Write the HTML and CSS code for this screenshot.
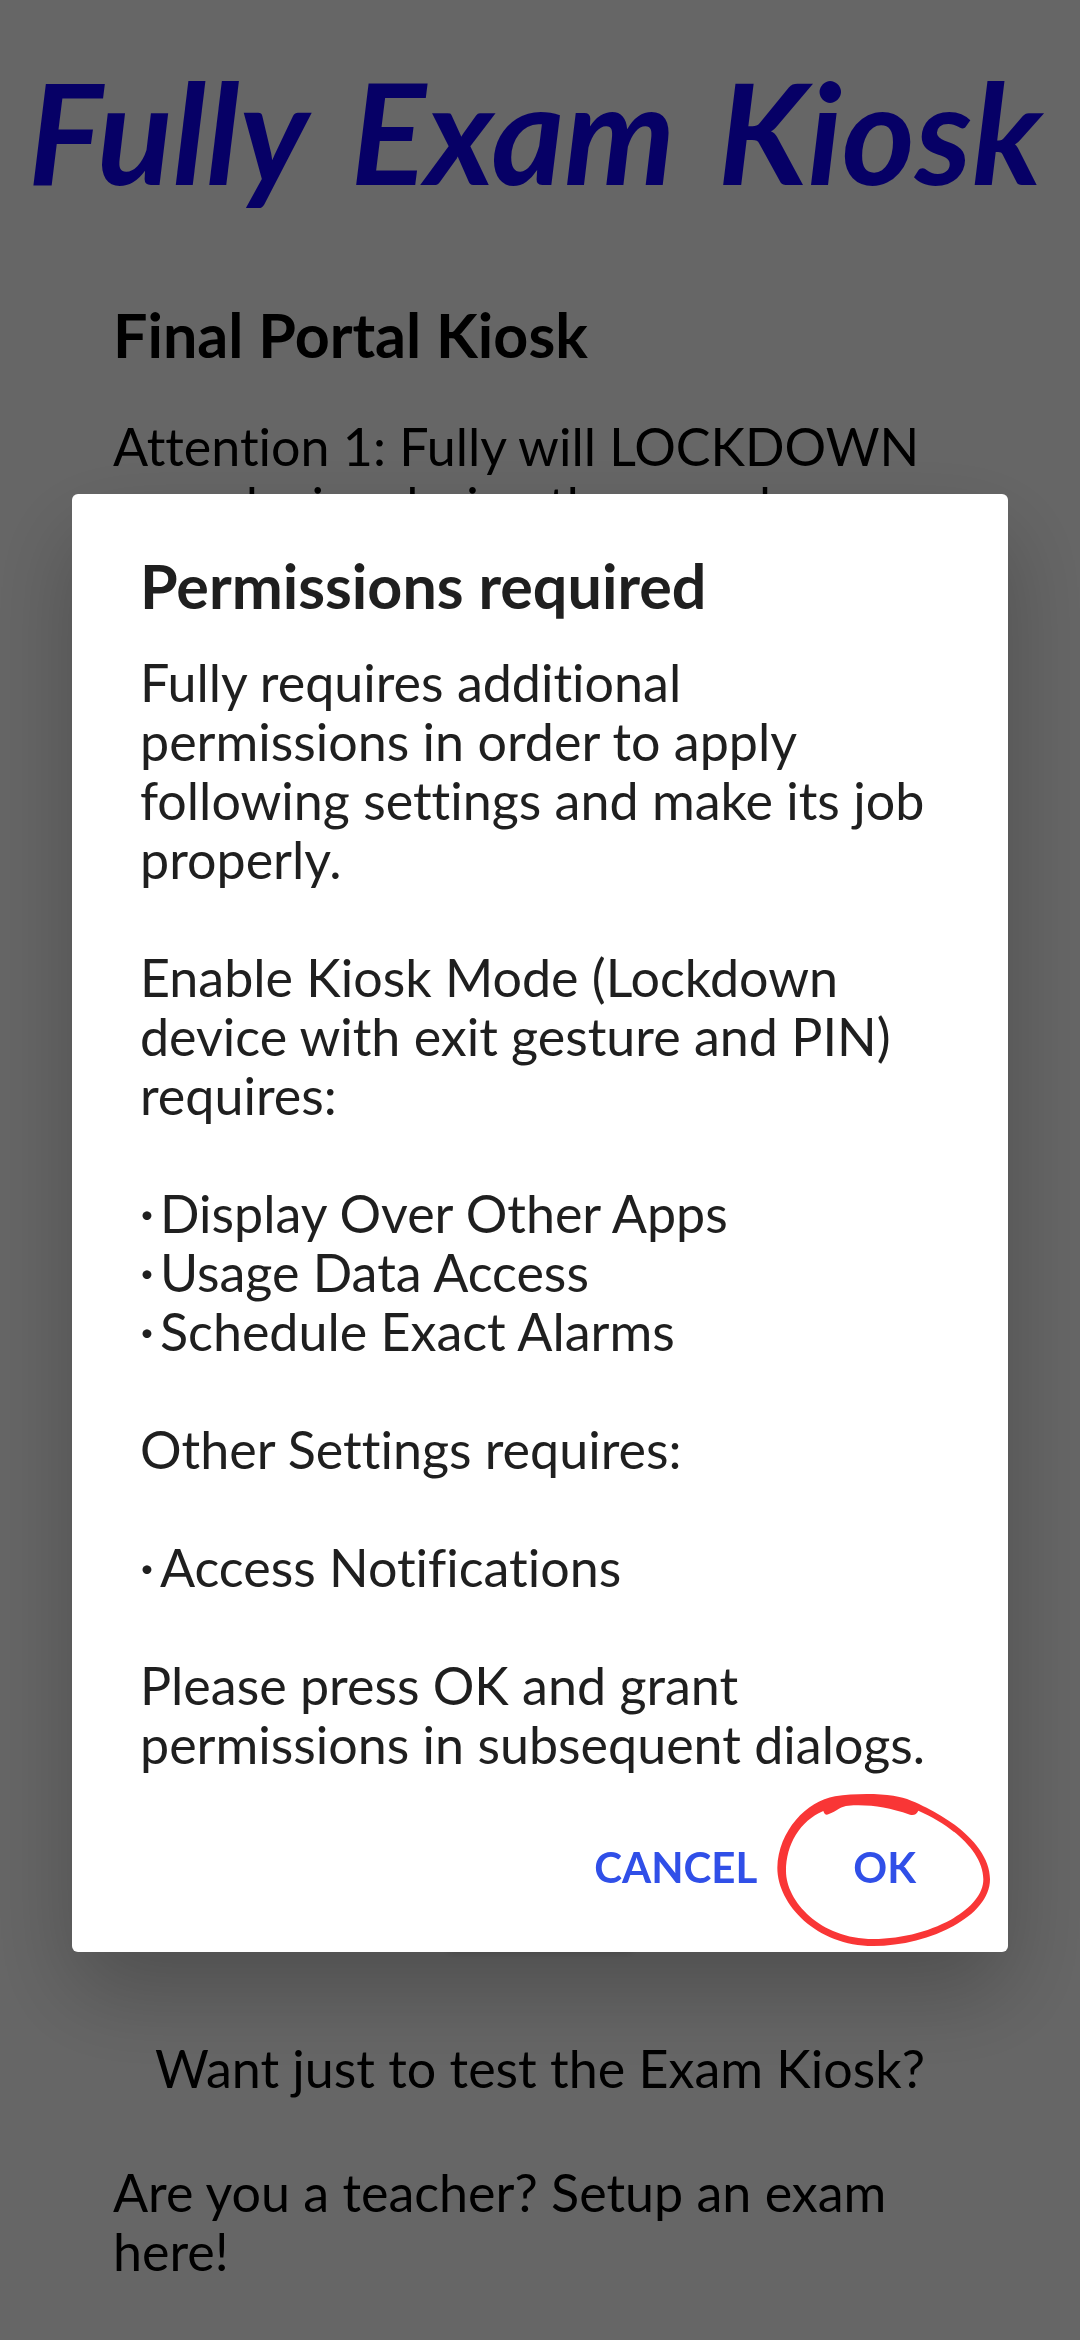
FILE: index.html
```
<!DOCTYPE html>
<html lang="en">
<head>
  <meta charset="utf-8">
  <meta name="viewport" content="width=device-width, initial-scale=1">
  <title>Fully Exam Kiosk</title>
  <link rel="stylesheet" href="styles.css">
</head>
<body>
  <div class="page">
    <header class="logo"><span>Fully</span> <span>Exam</span> <span>Kiosk</span></header>
    <main class="content">
      <h1 class="page-title">Final Portal Kiosk</h1>
      <p>Attention 1: Fully will LOCKDOWN your device during the exam!</p>
      <div class="content-end">
        <div class="start-slot"></div>
        <p class="test-link">Want just to test the Exam Kiosk?</p>
        <p>Are you a teacher? Setup an exam here!</p>
      </div>
    </main>
  </div>

  <div class="scrim">
    <section class="dialog" role="dialog" aria-modal="true" aria-labelledby="dialog-title">
      <h2 class="dialog-title" id="dialog-title">Permissions required</h2>
      <div class="dialog-body">
        <p>Fully requires additional permissions in order to apply following settings and make its job properly.</p>
        <p>Enable Kiosk Mode (Lockdown device with exit gesture and PIN) requires:</p>
        <ul class="permissions">
          <li><span class="dot">•</span>Display Over Other Apps</li>
          <li><span class="dot">•</span>Usage Data Access</li>
          <li><span class="dot">•</span>Schedule Exact Alarms</li>
        </ul>
        <p>Other Settings requires:</p>
        <ul class="permissions">
          <li><span class="dot">•</span>Access Notifications</li>
        </ul>
        <p>Please press OK and grant permissions in subsequent dialogs.</p>
      </div>
      <div class="actions">
        <button class="action" type="button">CANCEL</button>
        <button class="action" type="button">OK</button>
      </div>
      <svg class="marker" viewBox="165 60 660 471" aria-hidden="true">
        <path fill="#f93636" fill-rule="evenodd" d="M172 290C175 180 260 90 345 76C400 67 470 67 520 74C560 80 590 95 620 110C720 160 810 240 810 325C810 440 620 525 460 525C290 525 172 400 172 290ZM198 300C198 220 240 150 310 120Q314 134 325 130C350 120 365 104 385 104C450 100 500 108 570 131Q588 135 595 119C690 160 790 240 790 325C790 420 620 504 460 504C300 504 198 390 198 300Z"/>
      </svg>
    </section>
  </div>
</body>
</html>
```
FILE: styles.css
```
* {
  box-sizing: border-box;
}

body,
h1,
h2,
p,
ul {
  margin: 0;
  padding: 0;
}

body {
  background: #fff;
  color: #000;
  font: 400 52px/59px Lato, "Liberation Sans", sans-serif;
  font-variant-ligatures: none;
}

.page {
  display: flex;
  flex-direction: column;
  min-height: 100vh;
  padding: 42px 0 59px;
}

.logo {
  display: flex;
  justify-content: space-between;
  padding: 0 38px 0 28px;
  color: #1000ff;
  font-size: 140px;
  font-style: italic;
  font-weight: 700;
  line-height: 178px;
  white-space: nowrap;
}

.content {
  display: flex;
  flex: 1;
  flex-direction: column;
  gap: 46px;
  padding: 79px 113px 0;
}

.page-title {
  font-size: 61px;
  line-height: 72px;
}

.content-end {
  display: flex;
  flex-direction: column;
  gap: 65px;
  margin-top: auto;
}

.start-slot {
  align-self: center;
  width: 184px;
  height: 96px;
  margin-bottom: 26px;
  border-radius: 4px;
  box-shadow: 0 4px 8px rgba(0, 0, 0, .2);
}

.test-link {
  text-align: center;
}

.scrim {
  position: fixed;
  inset: 0;
  display: flex;
  align-items: center;
  padding: 106px 72px 0;
  background: rgba(0, 0, 0, .6);
}

.dialog {
  position: relative;
  flex: 1;
  padding: 56px 0 31px;
  border-radius: 6px;
  background: #fff;
  box-shadow: 0 40px 90px rgba(0, 0, 0, .24);
  color: #1f1f1f;
}

.dialog-title {
  padding: 0 68px;
  font-size: 61px;
  line-height: 72px;
}

.dialog-body {
  display: flex;
  flex-direction: column;
  gap: 59px;
  padding: 31px 60px 39px 68px;
}

.permissions {
  list-style: none;
}

.permissions li {
  display: flex;
}

.dot {
  width: 20px;
  font-size: 24px;
}

.actions {
  display: flex;
  justify-content: flex-end;
  padding-right: 44px;
}

.action {
  height: 108px;
  padding: 0 48px;
  border: 0;
  background: none;
  color: #304fe8;
  font: 700 42px/60px Lato, "Liberation Sans", sans-serif;
}

/* Hand-drawn ring around the confirm button */
.marker {
  position: absolute;
  right: 13px;
  bottom: 4px;
  width: 220px;
  height: 157px;
  pointer-events: none;
}
```
